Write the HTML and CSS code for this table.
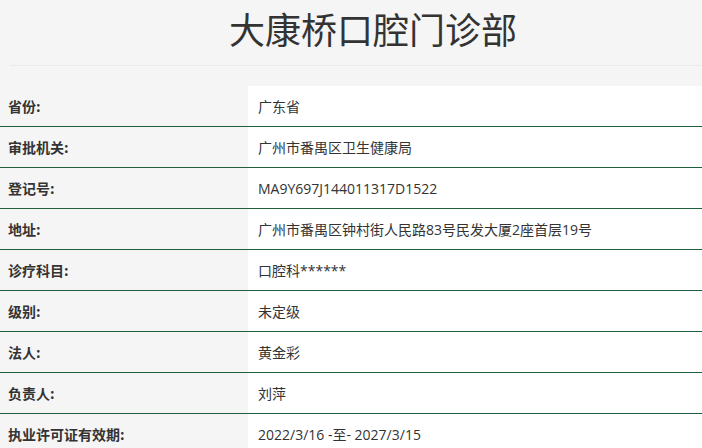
FILE: index.html
```html
<!DOCTYPE html>
<html lang="zh-CN">
<head>
<meta charset="utf-8">
<title>大康桥口腔门诊部</title>
<link rel="stylesheet" href="styles.css">
</head>
<body>
<div class="page">
  <header class="head">
    <h1 class="title">大康桥口腔门诊部</h1>
  </header>
  <div class="info">
    <div class="row"><div class="label">省份:</div><div class="value">广东省</div></div>
    <div class="row"><div class="label">审批机关:</div><div class="value">广州市番禺区卫生健康局</div></div>
    <div class="row"><div class="label">登记号:</div><div class="value">MA9Y697J144011317D1522</div></div>
    <div class="row"><div class="label">地址:</div><div class="value">广州市番禺区钟村街人民路83号民发大厦2座首层19号</div></div>
    <div class="row"><div class="label">诊疗科目:</div><div class="value">口腔科******</div></div>
    <div class="row"><div class="label">级别:</div><div class="value">未定级</div></div>
    <div class="row"><div class="label">法人:</div><div class="value">黄金彩</div></div>
    <div class="row"><div class="label">负责人:</div><div class="value">刘萍</div></div>
    <div class="row"><div class="label">执业许可证有效期:</div><div class="value">2022/3/16 -至- 2027/3/15</div></div>
  </div>
</div>
</body>
</html>
```

FILE: styles.css
```css
html {
  overflow: hidden;
  background: #f5f5f5;
}
body {
  margin: 0;
  padding: 0;
  background: #f5f5f5;
  color: #333;
  font-family: "Open Sans", "Noto Sans CJK SC", sans-serif;
}
.page {
  width: 702px;
  height: 448px;
  overflow: hidden;
}
.head {
  height: 65px;
  width: 726px;
  margin-left: 10px;
  border-bottom: 1px solid #e9e9e9;
}
.title {
  margin: 0;
  font-family: "Noto Sans CJK SC", sans-serif;
  font-weight: 400;
  font-size: 36px;
  line-height: 56px;
  text-align: center;
  color: #333;
}
.info {
  margin-top: 20px;
}
.row {
  display: flex;
  height: 40px;
  border-bottom: 1px solid #1f5d3e;
}
.label {
  width: 240px;
  padding-left: 8px;
  flex: none;
  display: flex;
  align-items: center;
  font-family: "Noto Sans CJK SC", sans-serif;
  font-weight: 700;
  font-size: 14px;
  color: #333;
}
.value {
  flex: 1;
  background: #fff;
  padding-left: 10px;
  display: flex;
  align-items: center;
  font-size: 14px;
  color: #333;
}
```
